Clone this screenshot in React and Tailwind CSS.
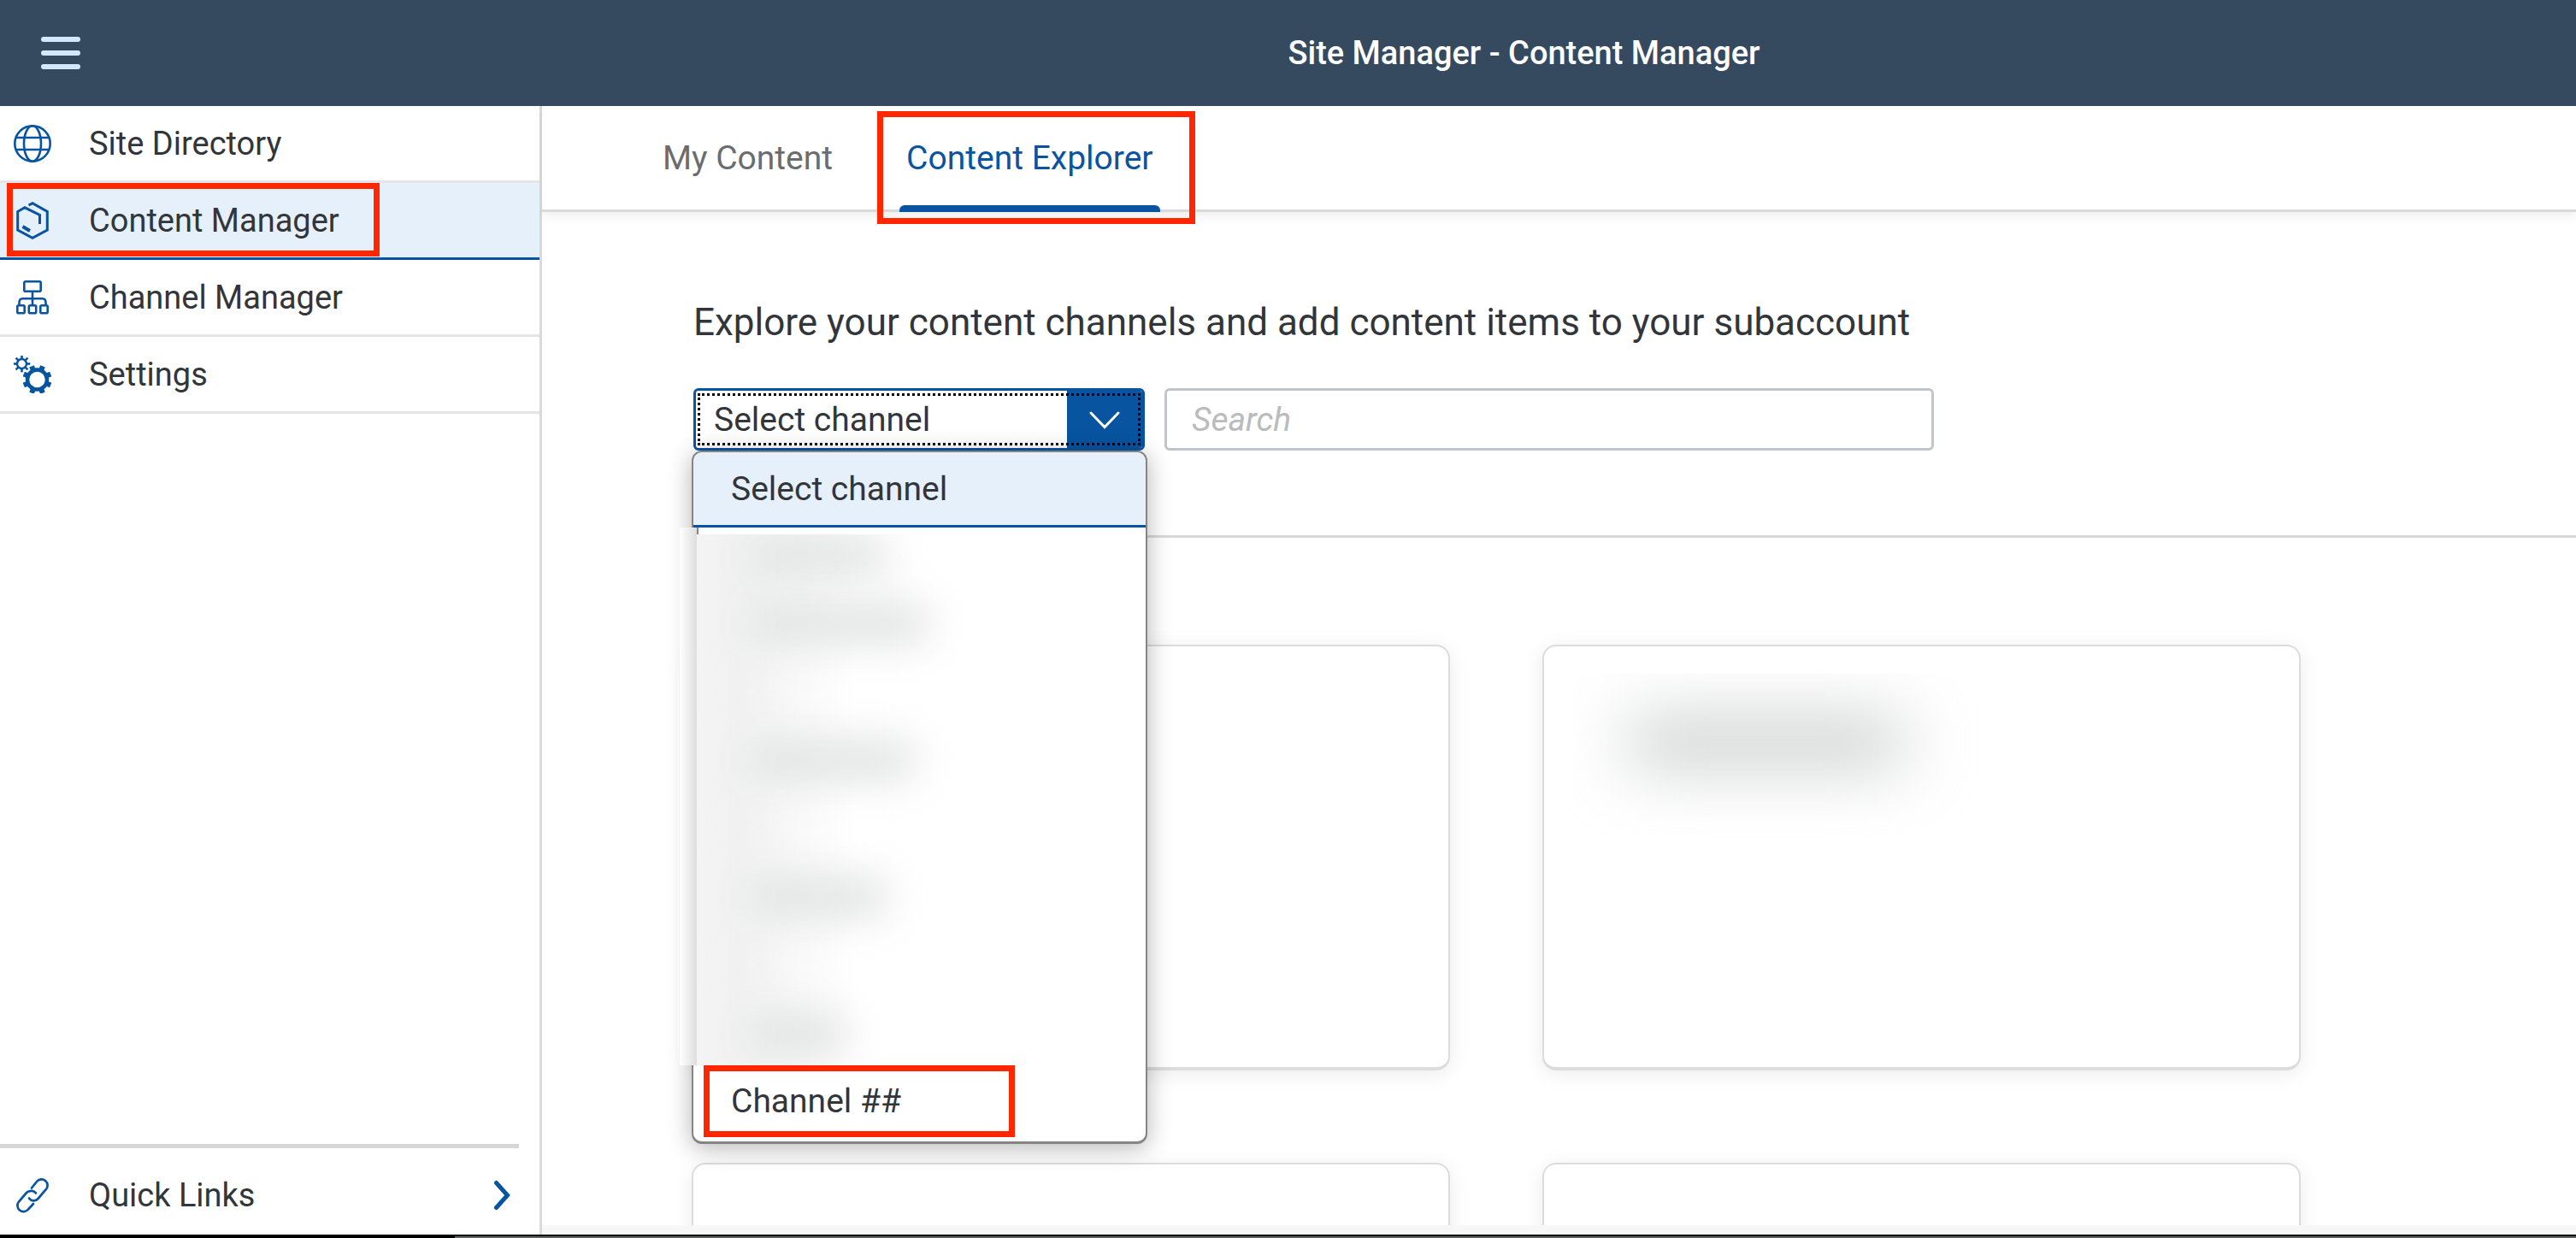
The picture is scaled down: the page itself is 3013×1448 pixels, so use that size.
function Globe() {
  return (
    <svg viewBox="0 0 44 44" className="size-11" fill="none" stroke="currentColor" strokeWidth="2.6" aria-hidden="true">
      <circle cx="22" cy="22" r="20.7" />
      <ellipse cx="22" cy="22" rx="10" ry="20.7" />
      <path d="M3 15h38M3 29h38" />
    </svg>
  );
}

function Hexagon() {
  return (
    <svg viewBox="0 0 44 44" className="size-11" fill="none" stroke="currentColor" strokeWidth="3" aria-hidden="true">
      <path d="M17.500 4 22 1.800 39.300 11.500V33L22 42.200 4.700 33V11.500L13 6.800 30.500 15.500V26" />
      <path d="M10.500 29 19 34" strokeWidth="4" />
    </svg>
  );
}

function Hierarchy() {
  return (
    <svg viewBox="0 0 44 44" className="size-11" fill="none" stroke="currentColor" strokeWidth="2.600" aria-hidden="true">
      <rect x="12.300" y="3.300" width="19.400" height="11.400" rx="1.500" />
      <path d="M22 15v16M6.500 31v-3c0-3.500 1.500-4.700 4-4.700h23c2.500 0 4 1.200 4 4.700v3" />
      <rect x="4.300" y="31.300" width="8.400" height="8.900" rx="1.500" />
      <rect x="17.800" y="31.300" width="8.400" height="8.900" rx="1.500" />
      <rect x="31.300" y="31.300" width="8.400" height="8.900" rx="1.500" />
    </svg>
  );
}

function Gear({ cx, cy, radius, ring, teeth, reach, tooth, turn }) {
  return (
    <g>
      <circle cx={cx} cy={cy} r={radius} fill="none" stroke="currentColor" strokeWidth={ring} />
      {Array.from({ length: teeth }, (_, i) => (
        <rect
          key={i}
          x={cx - tooth / 2}
          y={cy - reach}
          width={tooth}
          height={reach - radius}
          fill="currentColor"
          transform={`rotate(${turn + (360 / teeth) * i} ${cx} ${cy})`}
        />
      ))}
    </g>
  );
}

function Gears() {
  return (
    <svg viewBox="0 0 44 44" className="size-11" aria-hidden="true">
      <Gear cx={9.5} cy={9.5} radius={5.5} ring={2.4} teeth={8} reach={9.8} tooth={2.6} turn={0} />
      <Gear cx={27.5} cy={28} radius={11.5} ring={4.5} teeth={8} reach={17} tooth={6} turn={22.5} />
    </svg>
  );
}

function Chain() {
  return (
    <svg viewBox="0 0 44 44" className="size-11" fill="none" stroke="currentColor" strokeWidth="2.700" strokeLinecap="round" aria-hidden="true">
      <path d="M21 13.500 27 6a7 7 0 0 1 11 9L28.500 26c-3 3.500-8 3-10.500-0.500" />
      <path d="M26 19.500c-2.500-3.500-8-3.500-11-0.500L6 29.500a7 7 0 0 0 11 9L23 32" />
    </svg>
  );
}

const NAV = [
  { label: "Site Directory", Icon: Globe },
  { label: "Content Manager", Icon: Hexagon, active: true },
  { label: "Channel Manager", Icon: Hierarchy },
  { label: "Settings", Icon: Gears },
];

const REDACTED = ["w-40", "w-52", "w-2", "w-48", "w-2", "w-40", "w-2", "w-28"];

function Sidebar() {
  return (
    <aside className="flex w-[634px] shrink-0 flex-col border-r-3 border-[#d9d9d9] bg-white text-[38px]">
      <nav>
        {NAV.map(({ label, Icon, active }) => (
          <a
            key={label}
            href="#"
            aria-current={active ? "page" : undefined}
            className={
              active
                ? "relative flex h-[90px] items-center gap-11 border-b-3 border-[#0854a0] bg-[#e5f0fa] pl-4"
                : "relative flex h-[90px] items-center gap-11 border-b-3 border-[#e5e5e5] pl-4"
            }
          >
            <span className="text-[#0854a0]"><Icon /></span>
            <span>{label}</span>
            {active && <span className="absolute top-0 left-2 h-[86px] w-[436px] border-7 border-[#ff2600]" />}
          </a>
        ))}
      </nav>
      <div className="mt-auto">
        <div className="mr-6 h-[5px] bg-[#d6d6d6]" />
        <button type="button" className="flex h-[101px] w-full items-center gap-11 pt-2 pr-8 pl-4 text-left">
          <span className="text-[#0854a0]"><Chain /></span>
          <span>Quick Links</span>
          <svg viewBox="0 0 22 36" className="ml-auto h-9 w-[22px] text-[#0854a0]" fill="none" stroke="currentColor" strokeWidth="5" strokeLinecap="round" aria-hidden="true">
            <path d="M3.500 3.500 16.500 18 3.500 32.500" />
          </svg>
        </button>
      </div>
    </aside>
  );
}

function ChannelPopup() {
  return (
    <div role="listbox" aria-label="Channels" className="absolute top-full -left-0.5 z-10 h-[811px] w-[533px] rounded-xl border-2 border-[#858585] border-b-3 bg-white shadow-[0_4px_28px_rgba(0,0,0,0.3)]">
      <div role="option" aria-selected="true" className="flex h-[88px] items-center rounded-t-xl border-b-3 border-[#0854a0] bg-[#e5f0fa] pl-11">
        Select channel
      </div>
      <div className="relative -ml-4 h-[629px] overflow-hidden bg-linear-to-r from-[#f4f4f4] from-0% via-[#f3f3f3] via-12% to-white to-38%">
        <div className="absolute inset-y-0 left-0 w-5 bg-linear-to-r from-white to-[#dedede]" />
        <div className="flex flex-col gap-9 pt-2.5 pl-20">
          {REDACTED.map((width, i) => (
            <div key={i} className={`${width} h-11 shrink-0 bg-[#dfe0e0] blur-xl`} />
          ))}
        </div>
        <div className="absolute top-0 right-0 left-5 h-2 bg-white" />
        <div className="absolute top-0 left-5 h-2 w-0.5 bg-[#858585]" />
      </div>
      <div role="option" aria-selected="false" className="relative flex h-[84px] items-center pl-11">
        Channel ##
        <span className="absolute top-0 left-3 h-[84px] w-[364px] border-7 border-[#ff2600]" />
      </div>
    </div>
  );
}

function Card({ children }) {
  return (
    <article className="h-[498px] overflow-clip rounded-2xl border-2 border-b-4 border-[#dcdcdc] bg-white shadow-[0_4px_24px_rgba(0,0,0,0.08)]">
      {children}
    </article>
  );
}

export default function App() {
  return (
    <div className="flex h-screen flex-col overflow-hidden bg-white font-[Roboto,sans-serif] text-[39px] leading-12 text-[#32363a]">
      <header className="flex h-[124px] shrink-0 items-center bg-[#354a5f] text-white">
        <button type="button" aria-label="Menu" className="ml-12 flex w-[46px] flex-col gap-2.5">
          <span className="h-1.5 w-full rounded-full bg-[#d1e8ff]" />
          <span className="h-1.5 w-full rounded-full bg-[#d1e8ff]" />
          <span className="h-1.5 w-full rounded-full bg-[#d1e8ff]" />
        </button>
        <h1 className="flex-1 pl-[458px] text-center text-[38px] font-medium">Site Manager - Content Manager</h1>
      </header>

      <div className="flex min-h-0 flex-1">
        <Sidebar />
        <main className="flex min-w-0 flex-1 flex-col">
          <div role="tablist" className="flex h-[124px] shrink-0 border-b-3 border-[#d9d9d9] pl-[133px] shadow-[0_6px_10px_rgba(0,0,0,0.06)]">
            <button type="button" role="tab" aria-selected="false" className="mr-[70px] px-2 text-[#6a6d70]">My Content</button>
            <button type="button" role="tab" aria-selected="true" className="relative px-2 text-[#0854a0]">
              Content Explorer
              <span className="absolute inset-x-0 -bottom-[3px] h-2 rounded-t-md bg-[#0854a0]" />
              <span className="absolute top-1.5 -right-[41px] -bottom-[17px] -left-[26px] border-7 border-[#ff2600]" />
            </button>
          </div>

          <div className="min-h-0 flex-1 overflow-hidden">
            <section className="ml-[177px] h-[381px] border-b-3 border-[#d9d9d9] pt-[103px]">
              <h2 className="text-[44px] leading-[52px]">Explore your content channels and add content items to your subaccount</h2>
              <div className="mt-[51px] flex gap-[23px]">
                <div className="relative w-[528px]">
                  <button type="button" aria-haspopup="listbox" aria-expanded="true" className="relative flex h-[73px] w-full items-stretch overflow-hidden rounded-md border-3 border-[#0854a0] text-left">
                    <span className="flex flex-1 items-center pl-[21px]">Select channel</span>
                    <span className="flex w-[88px] items-center justify-center bg-[#0854a0] text-white">
                      <svg viewBox="0 0 36 24" className="h-6 w-9" fill="none" stroke="currentColor" strokeWidth="3" strokeLinecap="round" aria-hidden="true">
                        <path d="M2 4 18 20.500 34 4" />
                      </svg>
                    </span>
                    <span className="absolute inset-x-0.5 inset-y-[3px] border-3 border-dotted border-black" />
                  </button>
                  <ChannelPopup />
                </div>
                <input type="search" aria-label="Search" placeholder="Search" className="h-[73px] w-[900px] rounded-md border-3 border-[#bfc5ca] pl-[29px] placeholder:text-[#b9bbbd] placeholder:italic" />
              </div>
            </section>
            <section className="ml-[175px] grid grid-cols-[887px_887px] gap-[108px] pt-[125px]">
              <Card />
              <Card>
                <div className="mt-8 ml-8 h-48 w-[480px] overflow-hidden">
                  <div className="mt-14 ml-17 h-12 w-80 bg-[#bfc2c1] blur-2xl" />
                </div>
              </Card>
              <Card />
              <Card />
            </section>
          </div>
          <div className="h-[11px] shrink-0 bg-[#f7f7f7]" />
        </main>
      </div>
      <footer className="flex h-1 shrink-0 border-t-2 border-black bg-[#5f6361]">
        <div className="w-[532px] bg-black" />
      </footer>
    </div>
  );
}
